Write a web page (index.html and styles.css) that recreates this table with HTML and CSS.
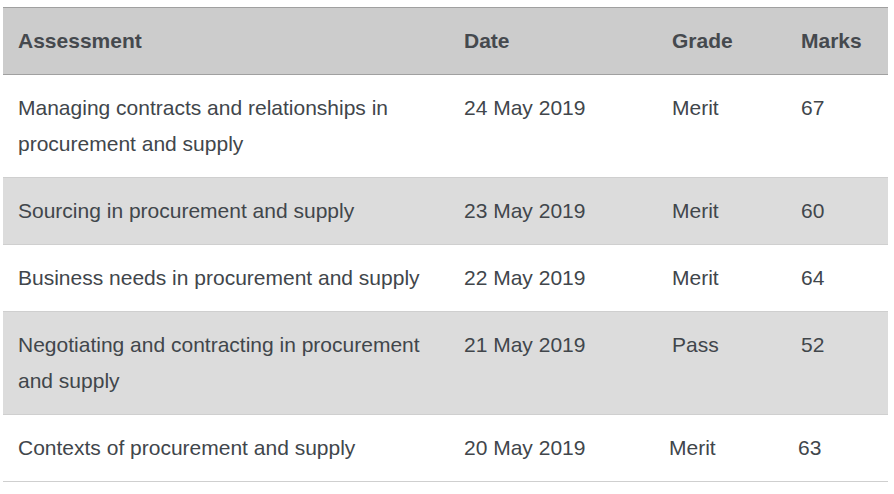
FILE: index.html
```html
<!DOCTYPE html>
<html>
<head>
<meta charset="utf-8">
<link rel="stylesheet" href="styles.css">
</head>
<body>
<div class="wrap">
<table class="results">
  <colgroup>
    <col class="c-assess"><col class="c-date"><col class="c-grade"><col class="c-marks">
  </colgroup>
  <thead>
    <tr><th>Assessment</th><th>Date</th><th>Grade</th><th>Marks</th></tr>
  </thead>
  <tbody>
    <tr><td>Managing contracts and relationships in procurement and supply</td><td>24 May 2019</td><td>Merit</td><td>67</td></tr>
    <tr class="alt"><td>Sourcing in procurement and supply</td><td>23 May 2019</td><td>Merit</td><td>60</td></tr>
    <tr><td>Business needs in procurement and supply</td><td>22 May 2019</td><td>Merit</td><td>64</td></tr>
    <tr class="alt"><td>Negotiating and contracting in procurement and supply</td><td>21 May 2019</td><td>Pass</td><td>52</td></tr>
    <tr class="shift"><td>Contexts of procurement and supply</td><td>20 May 2019</td><td>Merit</td><td>63</td></tr>
  </tbody>
</table>
</div>
</body>
</html>
```
FILE: styles.css
```css
html, body { margin: 0; padding: 0; background: #fff; }
.wrap { padding: 7px 6px 0 3px; }
.results {
  width: 885px;
  border-collapse: collapse;
  table-layout: fixed;
  font-family: "Liberation Sans", Arial, sans-serif;
  font-size: 21px;
  color: #41464b;
}
.c-assess { width: 446px; }
.c-date { width: 208px; }
.c-grade { width: 129px; }
.c-marks { width: 102px; }
.results th, .results td {
  text-align: left;
  vertical-align: top;
  padding: 15px 15px;
  line-height: 36px;
}
.results thead tr { background: #cccccc; border-top: 1px solid #a0a0a0; border-bottom: 1px solid #a0a0a0; }
.results th { font-weight: bold; color: #45494e; }
.results tbody tr { border-bottom: 1px solid #cfcfcf; }
.results tbody tr.alt { background: #dcdcdc; }
.results tr.shift td:nth-child(3), .results tr.shift td:nth-child(4) { padding-left: 12px; }
```
